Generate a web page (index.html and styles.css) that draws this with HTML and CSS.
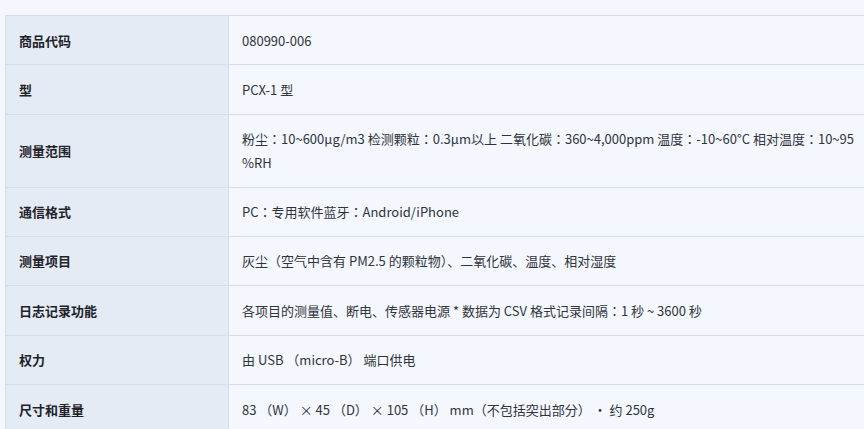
FILE: index.html
```html
<!DOCTYPE html>
<html>
<head>
<meta charset="utf-8">
<title>商品规格</title>
<link rel="stylesheet" href="styles.css">
</head>
<body>
<div class="page">
  <table class="spec">
    <tbody>
      <tr><th>商品代码</th><td>080990-006</td></tr>
      <tr><th>型</th><td>PCX-1 型</td></tr>
      <tr><th>测量范围</th><td>粉尘：10~600<span class="fw">μ</span>g/m3 检测颗粒：0.3<span class="fw">μ</span>m以上 二氧化碳：360~4,000ppm 温度：-10~60°C 相对温度：10~95<br>%RH</td></tr>
      <tr><th>通信格式</th><td>PC：专用软件蓝牙：Android/iPhone</td></tr>
      <tr><th>测量项目</th><td>灰尘（空气中含有 PM2.5 的颗粒物）、二氧化碳、温度、相对湿度</td></tr>
      <tr><th>日志记录功能</th><td>各项目的测量值、断电、传感器电源 * 数据为 CSV 格式记录间隔：1 秒 ~ 3600 秒</td></tr>
      <tr><th>权力</th><td>由 USB （micro-B） 端口供电</td></tr>
      <tr><th>尺寸和重量</th><td>83 （W） × 45 （D） × 105 （H） mm（不包括突出部分） ・ 约 250g</td></tr>
    </tbody>
  </table>
</div>
</body>
</html>
```
FILE: styles.css
```css
html, body {
  margin: 0;
  padding: 0;
  background: #f4f7fd;
  overflow: hidden;
}
body {
  font-family: "Noto Sans CJK JP", "Noto Sans CJK SC", sans-serif;
  font-size: 13px;
  color: #2b2f36;
}
.page {
  padding: 15px 0 0 5px;
}
.spec {
  border-collapse: collapse;
  table-layout: fixed;
  width: 900px;
}
.spec th,
.spec td {
  border: 1px solid #d4ddea;
  padding: 12.5px 13px;
  line-height: 1.8;
  text-align: left;
  vertical-align: middle;
  white-space: nowrap;
}
.spec th {
  width: 196px;
  background: #e4ebf5;
  font-weight: 700;
  color: #1f2329;
}
.spec td {
  background: #f4f7fd;
  font-weight: 400;
  color: #30343b;
}
.fw {
  font-variant-east-asian: full-width;
}
```
